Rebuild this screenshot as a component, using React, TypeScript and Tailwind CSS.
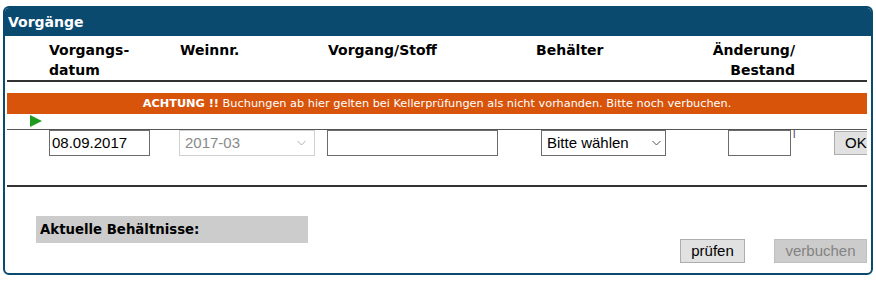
import React from "react";

const Chevron = ({ color }: { color: string }) => (
  <svg width="9" height="6" viewBox="0 0 9 6" className="shrink-0">
    <path d="M0.5 1 L4.5 5 L8.5 1" fill="none" stroke={color} strokeWidth="1" />
  </svg>
);

export default function App() {
  const verd = { fontFamily: '"DejaVu Sans", Verdana, sans-serif' };
  const ui = { fontFamily: '"Liberation Sans", Arial, sans-serif' };
  return (
    <div className="w-[876px] h-[281px] bg-white pt-[6px] px-[3px]">
      <div className="h-[269px] border-2 border-[#0b4a6f] rounded-[6px] overflow-hidden flex flex-col">
        <div
          className="h-[28px] bg-[#0b4a6f] text-white font-bold text-[14px] leading-[28px] pl-[3px]"
          style={verd}
        >
          Vorgänge
        </div>
        <div className="ml-[2px] mr-[4px] overflow-hidden flex flex-col">
          {/* column headers */}
          <div
            className="flex items-start pt-[4px] h-[44px] text-[14px] leading-[20px] font-bold text-black"
            style={verd}
          >
            <div className="ml-[42px] w-[131px]">
              Vorgangs-
              <br />
              datum
            </div>
            <div className="w-[148px]">Weinnr.</div>
            <div className="w-[208px]">Vorgang/Stoff</div>
            <div className="w-[173px]">Behälter</div>
            <div className="w-[86px] text-right whitespace-nowrap">
              Änderung/
              <br />
              Bestand
            </div>
          </div>
          <div className="h-[2px] bg-[#333333]" />
          {/* warning */}
          <div
            className="mt-[11px] h-[21px] bg-[#d9540b] text-white text-[11.3px] leading-[21px] text-center"
            style={verd}
          >
            <span className="font-bold">ACHTUNG !!</span> Buchungen ab hier gelten bei Kellerprüfungen als nicht
            vorhanden. Bitte noch verbuchen.
          </div>
          <div className="h-[15px] flex items-start pl-[23px] pt-[1px]">
            <svg width="12" height="12" viewBox="0 0 12 12">
              <path d="M0 0 L12 6 L0 12 Z" fill="#1f9c1f" />
            </svg>
          </div>
          <div className="h-[1px] bg-[#555555]" />
          {/* input row */}
          <div className="flex items-start h-[26px] text-[15px]" style={ui}>
            <div className="ml-[42px] w-[101px] h-[26px] border border-[#6b6b6b] flex items-center pl-[2px] text-black shrink-0">
              08.09.2017
            </div>
            <div className="ml-[29px] w-[136px] h-[26px] border border-[#d0d0d0] flex items-center justify-between pl-[5px] pr-[8px] text-[#8a8a8a] shrink-0">
              <span>2017-03</span>
              <Chevron color="#b0b0b0" />
            </div>
            <div className="ml-[12px] w-[171px] h-[26px] border border-[#6b6b6b] shrink-0" />
            <div className="ml-[43px] w-[125px] h-[26px] border border-[#6b6b6b] flex items-center justify-between pl-[5px] pr-[4px] text-black shrink-0">
              <span>Bitte wählen</span>
              <Chevron color="#555555" />
            </div>
            <div className="ml-[62px] w-[63px] h-[26px] border border-[#6b6b6b] shrink-0" />
            <div className="ml-[2px] w-[4px] text-[11px] leading-[11px] -mt-[1px] text-[#4b3a6e] shrink-0" style={ui}>
              l
            </div>
            <div className="ml-[37px] mt-[1px] h-[24px] border border-[#adadad] bg-[#e1e1e1] pl-[10px] pr-[10px] flex items-center text-black shrink-0">
              OK
            </div>
          </div>
          <div className="mt-[29px] h-[2px] bg-[#333333]" />
          {/* bottom */}
          <div className="flex items-start">
            <div
              className="ml-[29px] mt-[29px] w-[272px] h-[27px] bg-[#cccccc] font-bold text-[13.3px] leading-[27px] pl-[4px] text-black"
              style={verd}
            >
              Aktuelle Behältnisse:
            </div>
            <div className="ml-auto mt-[52px] flex items-center text-[15px]" style={ui}>
              <div className="w-[65px] h-[24px] border border-[#adadad] bg-[#e1e1e1] flex items-center justify-center text-black">
                prüfen
              </div>
              <div className="ml-[29px] w-[93px] h-[24px] border border-[#bfbfbf] bg-[#cccccc] flex items-center justify-center text-[#838383]">
                verbuchen
              </div>
            </div>
          </div>
        </div>
      </div>
    </div>
  );
}
